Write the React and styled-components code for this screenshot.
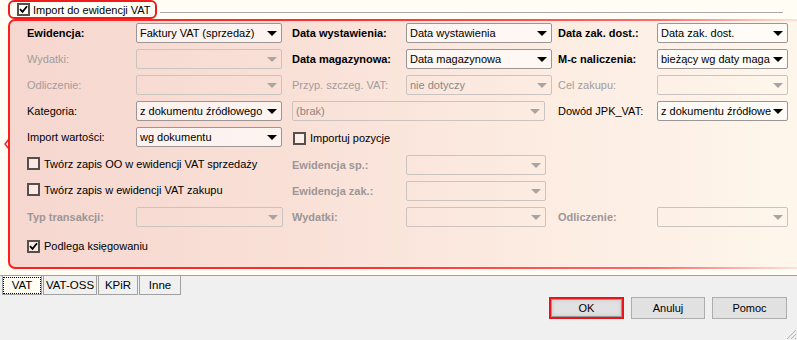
import React from 'react'
import styled, { createGlobalStyle } from 'styled-components'

const Global = createGlobalStyle`
  html, body {
    margin: 0;
    padding: 0;
  }
  body {
    font-family: 'Liberation Sans', Arial, sans-serif;
    font-size: 11px;
    color: #000;
  }
  * { box-sizing: border-box; }
`

const Window = styled.div`
  position: relative;
  width: 797px;
  height: 340px;
  overflow: hidden;
  background: #f0f0f0;
`

const Top = styled.div`
  background: #fffdf4;
  padding: 0 0 6px 8px;
`

const Header = styled.div`
  display: flex;
  height: 19px;
`

const TitleBox = styled.div`
  width: 149px;
  height: 19px;
  border: 2px solid #f01c1c;
  border-radius: 6px;
  display: flex;
  align-items: center;
  gap: 3px;
  padding-left: 7px;
`

const HeaderLine = styled.div`
  flex: 1;
  height: 1px;
  background: #a8a8a8;
  margin: 12px 14px 0 3px;
`

const Frame = styled.div`
  position: relative;
  padding: 2px 0 2px 2px;
  border-radius: 7px 0 0 7px;
  background: linear-gradient(to right, #ff1e1e 0%, #ff3030 45%, #ff6a6a 82%, rgba(255, 170, 170, 0.35) 100%);
`

const Panel = styled.div`
  border-radius: 5px 0 0 5px;
  background: linear-gradient(to right, #f6d7cf 0%, #f9e0d7 35%, #fcebe1 65%, #fef6ec 100%);
  padding: 2px 0 14px 17px;
`

const Notch = styled.svg`
  position: absolute;
  left: -5px;
  top: 119px;
`

const Grid = styled.div`
  display: grid;
  grid-template-columns: 109px 156px 114px 152px 99px 131px;
  grid-auto-rows: 20px;
  row-gap: 6px;
  align-items: center;
  margin-top: ${p => p.$top || 0}px;
`

const Label = styled.span`
  font-weight: ${p => (p.$bold ? 700 : 400)};
  color: ${p => (p.$dim ? (p.$bold ? '#9c9696' : '#a39c9c') : '#000')};
  white-space: nowrap;
`

const SelectBox = styled.div`
  position: relative;
  height: 20px;
  width: ${p => p.$w || 146}px;
  grid-column: ${p => p.$span || 'auto'};
  display: flex;
  align-items: center;
  padding: 0 16px 0 3px;
  border: 1px solid ${p => (p.$disabled ? '#cbc3bf' : '#9b9695')};
  border-radius: 2px;
  background: ${p => (p.$disabled ? 'transparent' : 'rgba(255, 255, 255, 0.62)')};
  color: ${p => (p.$disabled ? '#8c8686' : '#000')};

  &::after {
    content: '';
    position: absolute;
    right: 4px;
    top: 7px;
    width: 0;
    height: 0;
    border-left: 5px solid transparent;
    border-right: 5px solid transparent;
    border-top: 5px solid ${p => (p.$disabled ? '#a9a4a4' : '#000')};
  }
`

const Value = styled.span`
  flex: 1;
  min-width: 0;
  white-space: nowrap;
`

const CheckRow = styled.label`
  display: flex;
  align-items: center;
  gap: 4px;
  white-space: nowrap;
  grid-column: ${p => p.$span || 'auto'};
  margin-top: ${p => p.$top || 0}px;
  margin-left: ${p => p.$left || 0}px;
`

const Box = styled.span`
  width: 13px;
  height: 13px;
  flex: none;
  border: 2px solid #574e4e;
  background: rgba(255, 255, 255, 0.45);
  display: flex;
  align-items: center;
  justify-content: center;
`

const TabBar = styled.div`
  display: flex;
  gap: 1px;
  height: 20px;
  border-top: 1px solid #a0a0a0;
  padding-left: 2px;
`

const Tab = styled.div`
  width: ${p => p.$w}px;
  height: 19px;
  border: 1px solid #a0a0a0;
  border-top: none;
  display: flex;
  align-items: center;
  justify-content: center;
  font-size: 11.5px;
  background: ${p => (p.$active ? '#fffdf4' : '#f0f0f0')};
  outline: ${p => (p.$active ? '1px dotted #000' : 'none')};
  outline-offset: -2px;
`

const Buttons = styled.div`
  display: flex;
  justify-content: flex-end;
  gap: 7px;
  padding: 2px 10px 0 0;
`

const Button = styled.button`
  width: ${p => p.$w || 74}px;
  height: 22px;
  font: inherit;
  color: #000;
  background: #e1e1e1;
  border: ${p => (p.$marked ? '2px solid #e8141a' : '1px solid #adadad')};
  box-shadow: ${p => (p.$marked ? 'inset 0 0 0 1px #9a9a9a, inset 0 0 3px 2px #cfcfcf' : 'none')};
  padding: 0;
`

const Grip = styled.svg`
  position: absolute;
  right: 0;
  bottom: 0;
`

const Check = ({ checked }) => (
  <Box>
    {checked && (
      <svg width="9" height="9" viewBox="0 0 9 9">
        <path d="M1 4.2 L3.5 6.8 L8 1.2" fill="none" stroke="#000" strokeWidth="1.8" />
      </svg>
    )}
  </Box>
)

const Select = ({ value, ...rest }) => (
  <SelectBox {...rest}>
    <Value>{value}</Value>
  </SelectBox>
)

export default function App() {
  return (
    <Window>
      <Global />
      <Top>
        <Header>
          <TitleBox>
            <Check checked />
            <span>Import do ewidencji VAT</span>
          </TitleBox>
          <HeaderLine />
        </Header>
        <Frame>
          <Notch width="7" height="12" viewBox="0 0 7 12">
            <path d="M6 1 L2 6 L6 11" fill="none" stroke="#f01c1c" strokeWidth="1.4" />
          </Notch>
          <Panel>
            <Grid>
              <Label $bold>Ewidencja:</Label>
              <Select value="Faktury VAT (sprzedaż)" />
              <Label $bold>Data wystawienia:</Label>
              <Select value="Data wystawienia" />
              <Label $bold>Data zak. dost.:</Label>
              <Select value="Data zak. dost." $w={131} />

              <Label $dim>Wydatki:</Label>
              <Select $disabled />
              <Label $bold>Data magazynowa:</Label>
              <Select value="Data magazynowa" />
              <Label $bold>M-c naliczenia:</Label>
              <Select value="bieżący wg daty maga" $w={131} />

              <Label $dim>Odliczenie:</Label>
              <Select $disabled />
              <Label $dim>Przyp. szczeg. VAT:</Label>
              <Select value="nie dotyczy" $disabled />
              <Label $dim>Cel zakupu:</Label>
              <Select $disabled $w={131} />

              <Label>Kategoria:</Label>
              <Select value="z dokumentu źródłowego" />
              <Select value="(brak)" $disabled $w={253} $span="span 2" />
              <Label>Dowód JPK_VAT:</Label>
              <Select value="z dokumentu źródłowe" $w={131} />

              <Label>Import wartości:</Label>
              <Select value="wg dokumentu" />
              <CheckRow $span="span 4" $left={1} $top={2}>
                <Check />
                <span>Importuj pozycje</span>
              </CheckRow>
            </Grid>

            <Grid $top={8}>
              <CheckRow $span="span 2" $top={-3}>
                <Check />
                <span>Twórz zapis OO w ewidencji VAT sprzedaży</span>
              </CheckRow>
              <Label $bold $dim>Ewidencja sp.:</Label>
              <Select $disabled $w={140} $span="span 3" />

              <CheckRow $span="span 2" $top={-3}>
                <Check />
                <span>Twórz zapis w ewidencji VAT zakupu</span>
              </CheckRow>
              <Label $bold $dim>Ewidencja zak.:</Label>
              <Select $disabled $w={140} $span="span 3" />

              <Label $bold $dim>Typ transakcji:</Label>
              <Select $disabled $w={147} />
              <Label $bold $dim>Wydatki:</Label>
              <Select $disabled $w={140} />
              <Label $bold $dim>Odliczenie:</Label>
              <Select $disabled $w={131} />

              <CheckRow $span="span 6" $top={6}>
                <Check checked />
                <span>Podlega księgowaniu</span>
              </CheckRow>
            </Grid>
          </Panel>
        </Frame>
      </Top>

      <TabBar>
        <Tab $w={40} $active>VAT</Tab>
        <Tab $w={54}>VAT-OSS</Tab>
        <Tab $w={40}>KPiR</Tab>
        <Tab $w={42}>Inne</Tab>
      </TabBar>

      <Buttons>
        <Button $marked $w={75}>OK</Button>
        <Button>Anuluj</Button>
        <Button $w={75}>Pomoc</Button>
      </Buttons>

      <Grip width="12" height="12" viewBox="0 0 12 12">
        <path d="M11 2 L2 11 M11 6 L6 11 M11 10 L10 11" stroke="#b0b0b0" strokeWidth="1" />
      </Grip>
    </Window>
  )
}
